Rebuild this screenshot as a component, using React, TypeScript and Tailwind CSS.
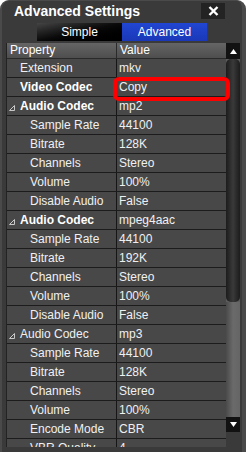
import React from "react";

type Row = { p: string; v: string; lvl: number; bold?: boolean; tri?: boolean };

const rows: Row[] = [
  { p: "Extension", v: "mkv", lvl: 0 },
  { p: "Video Codec", v: "Copy", lvl: 0, bold: true },
  { p: "Audio Codec", v: "mp2", lvl: 0, bold: true, tri: true },
  { p: "Sample Rate", v: "44100", lvl: 1 },
  { p: "Bitrate", v: "128K", lvl: 1 },
  { p: "Channels", v: "Stereo", lvl: 1 },
  { p: "Volume", v: "100%", lvl: 1 },
  { p: "Disable Audio", v: "False", lvl: 1 },
  { p: "Audio Codec", v: "mpeg4aac", lvl: 0, bold: true, tri: true },
  { p: "Sample Rate", v: "44100", lvl: 1 },
  { p: "Bitrate", v: "192K", lvl: 1 },
  { p: "Channels", v: "Stereo", lvl: 1 },
  { p: "Volume", v: "100%", lvl: 1 },
  { p: "Disable Audio", v: "False", lvl: 1 },
  { p: "Audio Codec", v: "mp3", lvl: 0, tri: true },
  { p: "Sample Rate", v: "44100", lvl: 1 },
  { p: "Bitrate", v: "128K", lvl: 1 },
  { p: "Channels", v: "Stereo", lvl: 1 },
  { p: "Volume", v: "100%", lvl: 1 },
  { p: "Encode Mode", v: "CBR", lvl: 1 },
  { p: "VBR Quality", v: "4", lvl: 1 },
];

function Tri() {
  return (
    <svg width="6" height="6" viewBox="0 0 6 6" className="shrink-0">
      <path d="M5.5 0.5 L5.5 5.5 L0.5 5.5 Z" fill="none" stroke="#c8c8c8" strokeWidth="1" />
    </svg>
  );
}

export default function App() {
  return (
    <div className="w-[246px] h-[452px] bg-white overflow-hidden">
      <div
        className="h-full rounded-t-[9px] bg-[#3a3a3a] border-l-[2px] border-r-[4px] border-t-[1px] border-[#4a4a4a] flex flex-col overflow-hidden"
        style={{ fontFamily: '"Liberation Sans", Arial, sans-serif' }}
      >
        {/* title */}
        <div className="h-[22px] flex items-start shrink-0">
          <div className="pl-[12px] pt-[2px] text-[14px] font-bold text-white leading-[17px]">
            Advanced Settings
          </div>
          <div className="ml-auto mr-[17px] mt-[2px] w-[24px] h-[16px] bg-[#232323] flex items-center justify-center">
            <svg width="11" height="10" viewBox="0 0 11 10">
              <path d="M1.5 1 L9.5 9 M9.5 1 L1.5 9" stroke="white" strokeWidth="2.4" strokeLinecap="butt" />
            </svg>
          </div>
        </div>
        {/* tabs */}
        <div className="h-[18px] flex pl-[35px] shrink-0 text-[12px] text-white">
          <div className="w-[85px] flex items-center justify-center bg-gradient-to-br from-[#454545] via-[#0a0a0a] to-[#000000]">
            Simple
          </div>
          <div className="w-[85px] flex items-center justify-center bg-gradient-to-b from-[#2146d2] to-[#1a38b8]">
            Advanced
          </div>
        </div>
        {/* grid */}
        <div className="mt-[2px] h-[404px] flex pl-[4px] relative shrink-0">
          <div className="w-[220px] h-full overflow-hidden border-l border-[#232323] text-[12px] text-[#f0f0f0]">
            <div className="h-[16px] flex bg-gradient-to-b from-[#656565] to-[#4e4e4e] border-b border-[#2a2a2a] text-white">
              <div className="w-[110px] border-r border-[#2a2a2a] pl-[3px] leading-[15px]">Property</div>
              <div className="flex-1 pl-[3px] leading-[15px]">Value</div>
            </div>
            {rows.map((r, i) => (
              <div key={i} className="h-[19px] flex bg-[#484848] border-b border-[#1c1c1c]">
                <div className="w-[110px] shrink-0 border-r border-[#161616] flex items-center">
                  {r.lvl === 0 ? (
                    <div className="flex items-center">
                      <div className="w-[13px] flex justify-end pr-[5px] pt-[3px]">{r.tri ? <Tri /> : null}</div>
                      <span className={r.bold ? "font-bold text-white" : ""}>{r.p}</span>
                    </div>
                  ) : (
                    <span className="pl-[23px]">{r.p}</span>
                  )}
                </div>
                <div className="flex-1 flex items-center pl-[2px]">{r.v}</div>
              </div>
            ))}
          </div>
          {/* scrollbar */}
          <div className="w-[14px] h-[389px] flex flex-col">
            <div className="h-[16px] bg-[#121212] flex items-center justify-center shrink-0">
              <svg width="7" height="5" viewBox="0 0 7 5">
                <path d="M3.5 0 L7 5 L0 5 Z" fill="white" />
              </svg>
            </div>
            <div className="h-[243px] shrink-0 bg-[#5c5c5c]">
              <div className="h-full rounded-[5px] bg-gradient-to-r from-[#1c1c1c] via-[#3a3a3a] to-[#1c1c1c]" />
            </div>
            <div className="flex-1 bg-gradient-to-r from-[#4a4a4a] via-[#6a6a6a] to-[#656565]" />
            <div className="h-[15px] bg-[#121212] flex items-center justify-center shrink-0">
              <svg width="7" height="5" viewBox="0 0 7 5">
                <path d="M0 0 L7 0 L3.5 5 Z" fill="white" />
              </svg>
            </div>
          </div>
          {/* highlight */}
          <div className="absolute left-[111px] top-[34px] w-[117px] h-[24px] border-[4px] border-[#ff0000] rounded-[6px]" />
        </div>
      </div>
    </div>
  );
}
